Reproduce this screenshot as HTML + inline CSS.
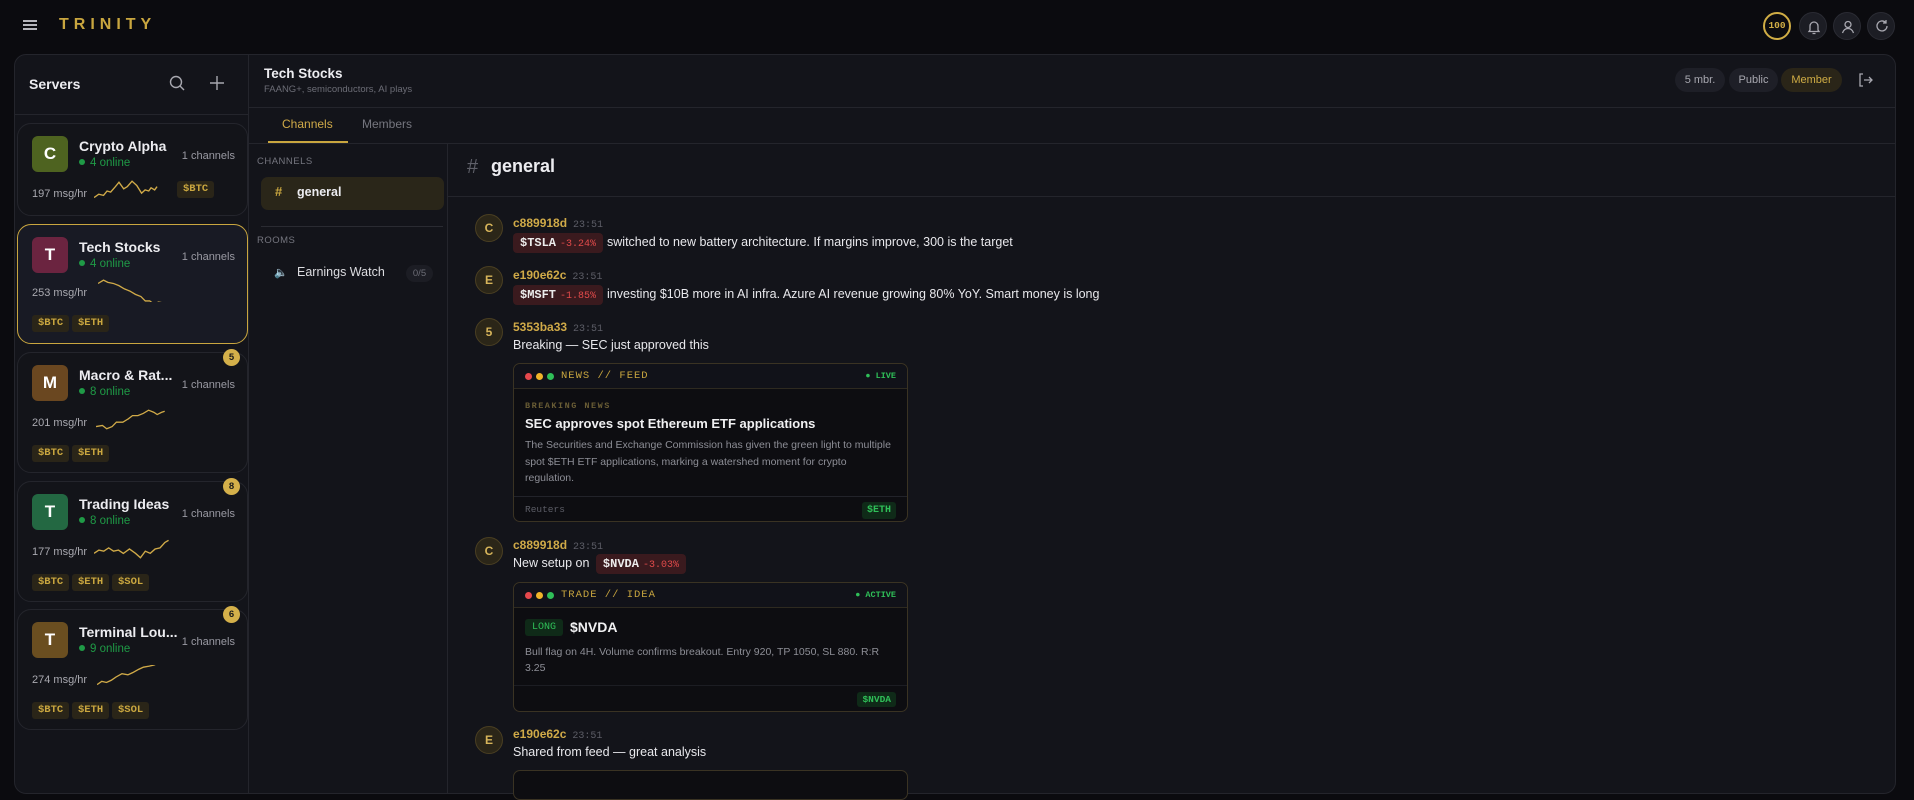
<!DOCTYPE html>
<html><head><meta charset="utf-8"><style>
*{box-sizing:border-box;margin:0;padding:0}
body{width:1914px;height:778px;overflow:hidden;background:#0b0b0f;font-family:"Liberation Sans",sans-serif;color:#e6e6ea;position:relative}
.a{position:absolute}
.mono{font-family:"Liberation Mono",monospace}
.panel{left:14px;top:54px;width:1882px;height:740px;background:#13141a;border:1px solid #24252c;border-radius:12px;overflow:hidden}
.card{left:2px;width:231px;border:1px solid #24252c;border-radius:14px;background:#131419}
.card.sel{border-color:#c9a63f;background:#181a24}
.av{left:14px;top:12px;width:36px;height:36px;border-radius:6px;color:#fff;font-weight:bold;font-size:17px;text-align:center;line-height:36px}
.nm{left:61px;top:14px;font-size:14px;font-weight:bold;color:#ececf0;white-space:nowrap}
.on{left:61px;top:33px;font-size:11.5px;color:#1f9a46}
.on:before{content:"";display:inline-block;width:6px;height:6px;border-radius:50%;background:#1f9a46;margin-right:5px;vertical-align:1px}
.ch{right:12px;top:26px;font-size:11px;color:#9a9aa3}
.rate{left:14px;font-size:11px;color:#a9a9b0}
.tg{height:17px;padding:0 6px;border-radius:3px;background:#2a2518;color:#c9a63f;font-family:"Liberation Mono",monospace;font-weight:bold;font-size:10.5px;line-height:17px}
.bdg{right:7px;top:-4px;width:17px;height:17px;border-radius:50%;background:#d4b04a;color:#1a1a1a;font-size:9.5px;text-align:center;line-height:17px;font-weight:bold}
.sp{width:88px;height:24px}
.cav{width:28px;height:28px;border-radius:50%;background:#2b2618;border:1px solid #4a3f22;color:#d6b45a;font-size:12px;font-weight:bold;text-align:center;line-height:26px}
.un{font-size:12px;font-weight:bold;color:#d0aa48}
.tm{font-family:"Liberation Mono",monospace;font-size:10px;color:#5c5d66;margin-left:6px;font-weight:normal}
.txt{font-size:12.5px;color:#e8e8ec}
.tk{display:inline-block;background:#3a1a1e;border-radius:4px;padding:0 7px;height:20px;line-height:20px;font-family:"Liberation Mono",monospace;font-weight:bold;font-size:12px;color:#ececec;margin-right:4px}
.tk i{font-style:normal;color:#e04a4a;font-weight:normal;font-size:10px;margin-left:4px}
.emb{border:1px solid #3a3323;border-radius:7px;background:#0d0d11;width:395px}
.eh{height:25px;border-bottom:1px solid #2e2a20;background:#111219;border-radius:7px 7px 0 0}
.dot{width:7px;height:7px;border-radius:50%;top:9px}
.pill{height:24px;border-radius:12px;background:#1e1f27;color:#a7a7af;font-size:11px;line-height:24px;text-align:center;top:13px}
.ic{width:28px;height:28px;border-radius:50%;background:#1c1d24;border:1px solid #2a2b33;top:12px}
</style></head><body>
<div class="a" style="left:23px;top:20px;width:14px;height:2px;background:#b5b5bb;box-shadow:0 4px 0 #b5b5bb,0 8px 0 #b5b5bb"></div>
<div class="a" style="left:59px;top:16px;font-size:16px;letter-spacing:5px;color:#c9a63f;font-weight:bold">TRINITY</div>
<div class="a mono" style="left:1763px;top:12px;width:28px;height:28px;border-radius:50%;border:2px solid #d0ad45;color:#d0ad45;font-size:9.5px;font-weight:bold;text-align:center;line-height:24px">100</div>
<div class="a ic" style="left:1799px"><svg width="28" height="28" viewBox="0 0 28 28" fill="none" stroke="#a8a8b0" stroke-width="1.3"><path d="M10 17V13a4 4 0 0 1 8 0v4l1 1.5H9z M12.5 20.5h3"/></svg></div>
<div class="a ic" style="left:1833px"><svg width="28" height="28" viewBox="0 0 28 28" fill="none" stroke="#a8a8b0" stroke-width="1.3"><circle cx="14" cy="11.5" r="3"/><path d="M8.5 20c1-3 3-4.5 5.5-4.5s4.5 1.5 5.5 4.5"/></svg></div>
<div class="a ic" style="left:1867px"><svg width="28" height="28" viewBox="0 0 28 28" fill="none" stroke="#a8a8b0" stroke-width="1.3"><path d="M19 13a5 5 0 1 1-1.5-3.6M18 7v3h-3"/></svg></div>

<div class="a panel">
 <div class="a" style="left:0;top:0;width:234px;height:740px;border-right:1px solid #24252c">
  <div class="a" style="left:14px;top:21px;font-size:14px;font-weight:bold;color:#ececf0">Servers</div>
  <svg class="a" style="left:153px;top:19px" width="18" height="18" fill="none" stroke="#a8a8b0" stroke-width="1.4"><circle cx="8" cy="8" r="5.5"/><path d="M12 12l4 4"/></svg>
  <svg class="a" style="left:193px;top:19px" width="18" height="18" fill="none" stroke="#a8a8b0" stroke-width="1.4"><path d="M9 2v14M2 9h14"/></svg>
  <div class="a" style="left:0;top:59px;width:234px;height:1px;background:#24252c"></div>

  <div class="a card" style="top:68px;height:93px">
   <div class="a av" style="background:#4e6320">C</div><div class="a nm">Crypto Alpha</div><div class="a on">4 online</div><div class="a ch">1 channels</div>
   <div class="a rate" style="top:64px">197 msg/hr</div>
   <svg class="a sp" style="left:76px;top:55px" viewBox="0 0 74 22" preserveAspectRatio="none" fill="none" stroke="#d0aa48" stroke-width="1.2"><path d="M0 17l4-3 4 1 3-4 3 1 4-5 3-4 4 6 3-2 4-5 4 4 4 7 3-3 3 1 2-3 3 2 2-3"/></svg>
   <div class="a tg" style="left:159px;top:57px">$BTC</div>
  </div>

  <div class="a card sel" style="top:169px;height:120px">
   <div class="a av" style="background:#6b2440">T</div><div class="a nm">Tech Stocks</div><div class="a on">4 online</div><div class="a ch">1 channels</div>
   <div class="a rate" style="top:62px">253 msg/hr</div>
   <svg class="a sp" style="left:80px;top:53px" viewBox="0 0 80 22" preserveAspectRatio="none" fill="none" stroke="#d0aa48" stroke-width="1.2"><path d="M0 5l5-3 4 2 5 1 5 2 5 3 5 2 5 3 5 2 4 4 4 0 4 3 4-2 5 1"/></svg>
   <div class="a tg" style="left:14px;top:90px">$BTC</div><div class="a tg" style="left:54px;top:90px">$ETH</div>
  </div>

  <div class="a card" style="top:297px;height:121px">
   <div class="a bdg">5</div>
   <div class="a av" style="background:#6a4720">M</div><div class="a nm">Macro &amp; Rat...</div><div class="a on">8 online</div><div class="a ch">1 channels</div>
   <div class="a rate" style="top:64px">201 msg/hr</div>
   <svg class="a sp" style="left:78px;top:55px" viewBox="0 0 82 22" preserveAspectRatio="none" fill="none" stroke="#d0aa48" stroke-width="1.2"><path d="M0 17l6-1 4 3 5-2 4-4 6 0 5-3 4-3 5 0 5-2 5-3 5 2 3 2 4-2 3-1"/></svg>
   <div class="a tg" style="left:14px;top:92px">$BTC</div><div class="a tg" style="left:54px;top:92px">$ETH</div>
  </div>

  <div class="a card" style="top:426px;height:121px">
   <div class="a bdg">8</div>
   <div class="a av" style="background:#236842">T</div><div class="a nm">Trading Ideas</div><div class="a on">8 online</div><div class="a ch">1 channels</div>
   <div class="a rate" style="top:64px">177 msg/hr</div>
   <svg class="a sp" style="left:76px;top:55px" viewBox="0 0 72 22" preserveAspectRatio="none" fill="none" stroke="#d0aa48" stroke-width="1.2"><path d="M0 15l4-3 4 1 4-3 4 3 4-1 4 3 5-4 5 4 4 4 4-6 4 2 4-4 4-1 4-5 3-2"/></svg>
   <div class="a tg" style="left:14px;top:92px">$BTC</div><div class="a tg" style="left:54px;top:92px">$ETH</div><div class="a tg" style="left:94px;top:92px">$SOL</div>
  </div>

  <div class="a card" style="top:554px;height:121px">
   <div class="a bdg">6</div>
   <div class="a av" style="background:#6a4e20">T</div><div class="a nm">Terminal Lou...</div><div class="a on">9 online</div><div class="a ch">1 channels</div>
   <div class="a rate" style="top:64px">274 msg/hr</div>
   <svg class="a sp" style="left:79px;top:55px" viewBox="0 0 74 22" preserveAspectRatio="none" fill="none" stroke="#d0aa48" stroke-width="1.2"><path d="M0 18l4-3 4 1 4-2 4-3 5-3 5 1 4-2 5-3 4-2 5-1 4-1 4-2 4 0 4-2 3 1"/></svg>
   <div class="a tg" style="left:14px;top:92px">$BTC</div><div class="a tg" style="left:54px;top:92px">$ETH</div><div class="a tg" style="left:94px;top:92px">$SOL</div>
  </div>
 </div>

 <div class="a" style="left:249px;top:11px;font-size:13.5px;font-weight:bold;color:#ececf0">Tech Stocks</div>
 <div class="a" style="left:249px;top:29px;font-size:9.5px;color:#6c6d76">FAANG+, semiconductors, AI plays</div>
 <div class="a pill" style="left:1660px;width:50px">5 mbr.</div>
 <div class="a pill" style="left:1714px;width:49px">Public</div>
 <div class="a pill" style="left:1766px;width:61px;background:#2a2518;color:#d0ad45">Member</div>
 <svg class="a" style="left:1841px;top:16px" width="18" height="18" fill="none" stroke="#a8a8b0" stroke-width="1.3"><path d="M7 3H4v12h3M8 9h8M13 6l3 3-3 3"/></svg>
 <div class="a" style="left:234px;top:52px;width:1648px;height:1px;background:#24252c"></div>
 <div class="a" style="left:267px;top:62px;font-size:12px;color:#d0aa48">Channels</div>
 <div class="a" style="left:253px;top:86px;width:80px;height:2px;background:#c9a63f"></div>
 <div class="a" style="left:347px;top:62px;font-size:12px;color:#75767f">Members</div>
 <div class="a" style="left:234px;top:88px;width:1648px;height:1px;background:#24252c"></div>

 <div class="a" style="left:432px;top:89px;width:1px;height:660px;background:#24252c"></div>
 <div class="a" style="left:242px;top:101px;font-size:9.5px;letter-spacing:.5px;color:#74757e">CHANNELS</div>
 <div class="a" style="left:246px;top:122px;width:183px;height:33px;border-radius:7px;background:#2a2619"></div>
 <div class="a" style="left:260px;top:129px;font-size:13px;color:#c9a63f;font-weight:bold">#</div>
 <div class="a" style="left:282px;top:130px;font-size:12.5px;font-weight:bold;color:#ececf0">general</div>
 <div class="a" style="left:246px;top:171px;width:182px;height:1px;background:#2a2b32"></div>
 <div class="a" style="left:242px;top:180px;font-size:9.5px;letter-spacing:.5px;color:#74757e">ROOMS</div>
 <div class="a" style="left:259px;top:211px;font-size:11px;color:#9ab">🔈</div>
 <div class="a" style="left:282px;top:210px;font-size:12.5px;color:#dcdce0">Earnings Watch</div>
 <div class="a" style="left:391px;top:210px;width:27px;height:17px;border-radius:9px;background:#1c1d24;color:#6c6d76;font-size:9.5px;text-align:center;line-height:17px">0/5</div>

 <div class="a" style="left:452px;top:101px;font-size:20px;color:#5f6069">#</div>
 <div class="a" style="left:476px;top:101px;font-size:18px;font-weight:bold;color:#ececf0">general</div>
 <div class="a" style="left:433px;top:141px;width:1449px;height:1px;background:#24252c"></div>
</div>

<div class="a cav" style="left:475px;top:214px">C</div>
<div class="a un" style="left:513px;top:216px">c889918d<span class="tm">23:51</span></div>
<div class="a txt" style="left:513px;top:233px"><span class="tk">$TSLA<i>-3.24%</i></span>switched to new battery architecture. If margins improve, 300 is the target</div>

<div class="a cav" style="left:475px;top:266px">E</div>
<div class="a un" style="left:513px;top:268px">e190e62c<span class="tm">23:51</span></div>
<div class="a txt" style="left:513px;top:285px"><span class="tk">$MSFT<i>-1.85%</i></span>investing $10B more in AI infra. Azure AI revenue growing 80% YoY. Smart money is long</div>

<div class="a cav" style="left:475px;top:318px">5</div>
<div class="a un" style="left:513px;top:320px">5353ba33<span class="tm">23:51</span></div>
<div class="a txt" style="left:513px;top:338px">Breaking — SEC just approved this</div>

<div class="a emb" style="left:513px;top:363px;height:159px">
 <div class="eh"></div>
 <div class="a dot" style="left:11px;background:#e5484d"></div><div class="a dot" style="left:22px;background:#f0b429"></div><div class="a dot" style="left:33px;background:#2fbf58"></div>
 <div class="a mono" style="left:47px;top:6px;font-size:10.5px;color:#c9a63f;letter-spacing:1px">NEWS // FEED</div>
 <div class="a mono" style="right:11px;top:7px;font-size:8.5px;color:#2fbf58;font-weight:bold">● LIVE</div>
 <div class="a mono" style="left:11px;top:37px;font-size:8.5px;color:#6a5d35;letter-spacing:1.5px;font-weight:bold">BREAKING NEWS</div>
 <div class="a" style="left:11px;top:52px;font-size:13px;font-weight:bold;color:#f0f0f2">SEC approves spot Ethereum ETF applications</div>
 <div class="a" style="left:11px;top:73px;width:370px;font-size:10.5px;line-height:16.5px;color:#8d8e96">The Securities and Exchange Commission has given the green light to multiple spot $ETH ETF applications, marking a watershed moment for crypto regulation.</div>
 <div class="a" style="left:0;top:132px;width:393px;height:1px;background:#22232a"></div>
 <div class="a mono" style="left:11px;top:140px;font-size:9.5px;color:#5c5d66">Reuters</div>
 <div class="a mono" style="right:11px;top:138px;height:17px;padding:0 5px;background:#0f2a18;color:#2fbf58;font-size:10px;font-weight:bold;line-height:17px;border-radius:3px">$ETH</div>
</div>

<div class="a cav" style="left:475px;top:537px">C</div>
<div class="a un" style="left:513px;top:538px">c889918d<span class="tm">23:51</span></div>
<div class="a txt" style="left:513px;top:554px">New setup on <span class="tk" style="margin-left:3px">$NVDA<i>-3.03%</i></span></div>

<div class="a emb" style="left:513px;top:582px;height:130px">
 <div class="eh"></div>
 <div class="a dot" style="left:11px;background:#e5484d"></div><div class="a dot" style="left:22px;background:#f0b429"></div><div class="a dot" style="left:33px;background:#2fbf58"></div>
 <div class="a mono" style="left:47px;top:6px;font-size:10.5px;color:#c9a63f;letter-spacing:1px">TRADE // IDEA</div>
 <div class="a mono" style="right:11px;top:7px;font-size:8.5px;color:#2fbf58;font-weight:bold">● ACTIVE</div>
 <div class="a mono" style="left:11px;top:36px;height:17px;padding:0 7px;background:#0f2a18;color:#2fbf58;font-size:10px;line-height:17px;border-radius:3px">LONG</div>
 <div class="a" style="left:56px;top:36px;font-size:14px;font-weight:bold;color:#f0f0f2">$NVDA</div>
 <div class="a" style="left:11px;top:61px;width:370px;font-size:10.5px;line-height:16px;color:#8d8e96">Bull flag on 4H. Volume confirms breakout. Entry 920, TP 1050, SL 880. R:R 3.25</div>
 <div class="a" style="left:0;top:102px;width:393px;height:1px;background:#1c1d23"></div>
 <div class="a mono" style="right:11px;top:109px;height:15px;padding:0 5px;background:#0f2a18;color:#2fbf58;font-size:9.5px;font-weight:bold;line-height:15px;border-radius:3px">$NVDA</div>
</div>

<div class="a cav" style="left:475px;top:726px">E</div>
<div class="a un" style="left:513px;top:727px">e190e62c<span class="tm">23:51</span></div>
<div class="a txt" style="left:513px;top:745px">Shared from feed — great analysis</div>
<div class="a emb" style="left:513px;top:770px;height:30px"></div>
</body></html>
